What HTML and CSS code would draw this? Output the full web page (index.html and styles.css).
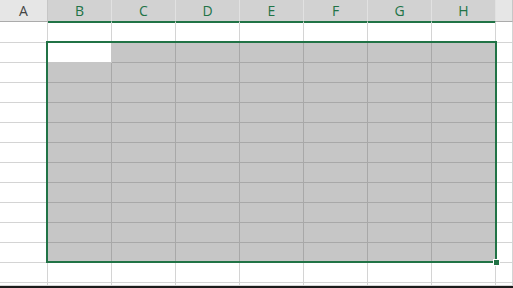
FILE: index.html
```html
<!DOCTYPE html>
<html>
<head>
    <title>Sheet</title>
    <link rel="stylesheet" href="styles.css">
</head>
<body>
    <div class="sheet" id="sheet">
        <div class="selection">
            <span class="handle"></span>
        </div>
    </div>
    <div class="bottom-bar"></div>

    <script>
        const sheet = document.getElementById('sheet');
        const cols = ['A', 'B', 'C', 'D', 'E', 'F', 'G', 'H', ''];
        const rowCount = 14;

        // header row
        cols.forEach((name, i) => {
            const head = document.createElement('div');
            head.className = 'head';
            if (i >= 1 && i <= 7) {
                head.classList.add('sel');
            }
            head.textContent = name;
            sheet.appendChild(head);
        });

        // body rows
        for (let r = 1; r <= rowCount; r++) {
            cols.forEach((name, i) => {
                const cell = document.createElement('div');
                cell.className = 'cell';
                const inCols = i >= 1 && i <= 7;
                const inRows = r >= 2 && r <= 12;
                if (inCols && inRows) {
                    cell.classList.add(r === 2 && i === 1 ? 'active' : 'sel');
                }
                sheet.appendChild(cell);
            });
        }
    </script>
</body>
</html>
```

FILE: styles.css
```css
* {
    box-sizing: border-box;
    margin: 0;
    padding: 0;
}

body {
    background-color: #fff;
    font-family: "Open Sans", "Noto Sans", sans-serif;
    overflow: hidden;
}

.sheet {
    position: relative;
    display: grid;
    grid-template-columns: 48px repeat(7, 64px) 1fr;
    grid-template-rows: 22px 21px repeat(12, 20px) 3px;
    height: 286px;
    overflow: hidden;
}

.head {
    background-color: #e6e6e6;
    border-right: 1px solid #c6c6c6;
    border-bottom: 1px solid #ababab;
    color: #444;
    font-size: 14px;
    line-height: 21px;
    text-align: center;
}

.head.sel {
    background-color: #d2d2d2;
    border-right-color: #e1e1e1;
    border-bottom-color: #217346;
    color: #217346;
    box-shadow: 0 1px 0 #217346;
}

.cell {
    border-right: 1px solid #d4d4d4;
    border-bottom: 1px solid #d4d4d4;
}

.cell.sel {
    background-color: #c6c6c6;
    border-right-color: #a8a8a8;
    border-bottom-color: #a8a8a8;
}

.cell.active {
    background-color: #fff;
    border-right-color: #c6c6c6;
    border-bottom-color: #c6c6c6;
}

.selection {
    position: absolute;
    left: 46px;
    top: 41px;
    width: 451px;
    height: 222px;
    border: 2px solid #217346;
}

.handle {
    position: absolute;
    right: -5px;
    bottom: -5px;
    width: 7px;
    height: 7px;
    background-color: #217346;
    border: 1px solid #fff;
}

.bottom-bar {
    height: 2px;
    background-color: #1b1b1b;
}
```
